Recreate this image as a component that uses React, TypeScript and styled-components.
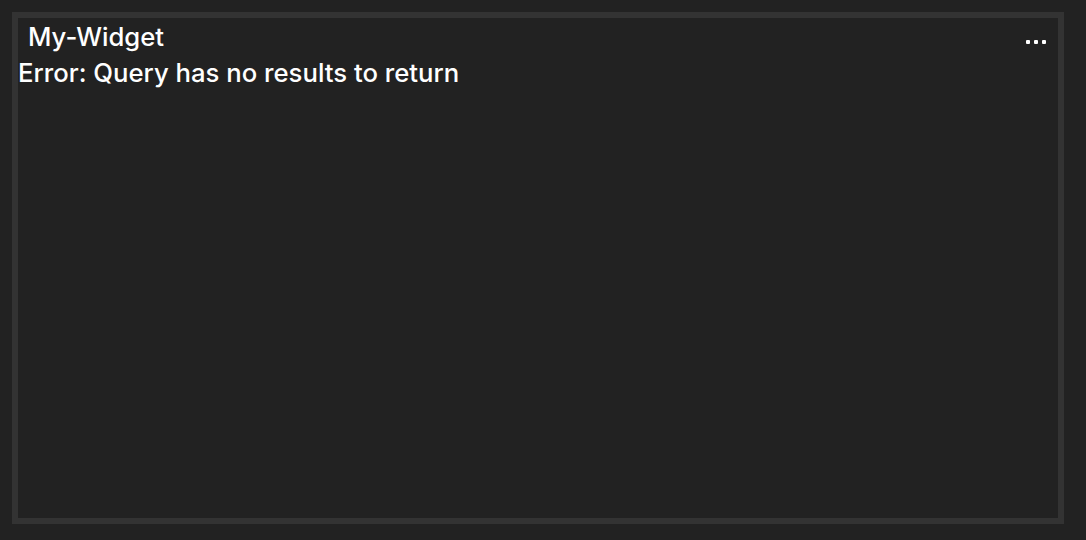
import styled, { createGlobalStyle } from "styled-components";

const GlobalStyle = createGlobalStyle`
    html, body {
        margin: 0;
        padding: 0;
        background: #222222;
    }
    body {
        font-family: Inter, "Liberation Sans", sans-serif;
        color: #ffffff;
    }
`;

const Page = styled.div`
    padding: 12px 22px 16px 12px;
    height: 540px;
    box-sizing: border-box;
`;

const Widget = styled.section`
    box-sizing: border-box;
    width: 1052px;
    height: 512px;
    border: 6px solid #333333;
    background: #222222;
    display: flex;
    flex-direction: column;
`;

const Header = styled.header`
    display: flex;
    align-items: center;
    justify-content: space-between;
    height: 38px;
    padding: 0 12px 0 10px;
`;

const Title = styled.h2`
    margin: 0;
    font-size: 25.7px;
    font-weight: 500;
    line-height: 38px;
`;

const Menu = styled.button`
    display: flex;
    gap: 4px;
    padding: 0;
    margin-top: 10px;
    background: none;
    border: none;
    cursor: pointer;
`;

const Dot = styled.span`
    width: 4px;
    height: 4px;
    border-radius: 1px;
    background: #ffffff;
`;

const ErrorText = styled.p`
    margin: 0;
    font-size: 25.7px;
    font-weight: 500;
    line-height: 34px;
`;

export default function App() {
    return (
        <>
            <GlobalStyle />
            <Page>
                <Widget>
                    <Header>
                        <Title>My-Widget</Title>
                        <Menu aria-label="menu">
                            <Dot />
                            <Dot />
                            <Dot />
                        </Menu>
                    </Header>
                    <ErrorText>Error: Query has no results to return</ErrorText>
                </Widget>
            </Page>
        </>
    );
}
